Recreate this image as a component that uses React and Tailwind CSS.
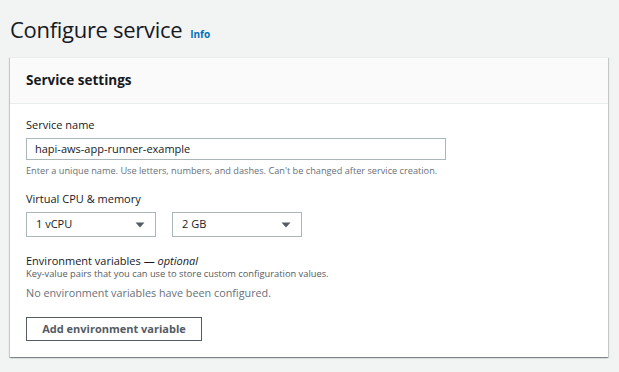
const Caret = () => (
  <svg width="10" height="8" viewBox="0 0 10 8" className="shrink-0">
    <path d="M0.5 1.5h9L5 6.5z" fill="#545b64" />
  </svg>
);

const Select = ({ value }) => (
  <div className="w-[130px] h-[25px] border border-[#aab7b8] bg-white flex items-center justify-between pl-[9px] pr-[10px]">
    <span className="text-[11px] text-[#16191f]">{value}</span>
    <Caret />
  </div>
);

export default function App() {
  return (
    <div
      className="min-h-screen w-[619px] h-[372px] bg-[#f2f3f3] overflow-hidden"
      style={{ fontFamily: '"Open Sans", "Noto Sans", Arial, sans-serif' }}
    >
      <div className="pl-[10px] pt-[14px] flex items-baseline gap-[8px]">
        <h1 className="text-[22px] leading-[30px] text-[#16191f] tracking-[-0.3px]">Configure service</h1>
        <a className="text-[10px] font-bold text-[#0073bb]">Info</a>
      </div>

      <div className="mt-[13px] ml-[10px] w-[598px] bg-white border-t border-[#eaeded] shadow-[0_1px_1px_0_rgba(0,28,36,0.3),1px_1px_1px_0_rgba(0,28,36,0.15),-1px_1px_1px_0_rgba(0,28,36,0.15)]">
        <div className="h-[46px] bg-[#fafafa] border-b border-[#eaeded] flex items-center px-[16px]">
          <h2 className="text-[13.5px] font-bold text-[#16191f]">Service settings</h2>
        </div>

        <div className="px-[16px] pt-[13px] pb-[16px]">
          <div className="text-[11px] leading-[16px] text-[#16191f]">Service name</div>
          <div className="mt-[5px] w-[420px] h-[22px] border border-[#aab7b8] flex items-center pl-[8px]">
            <span className="text-[11px] text-[#16191f]">hapi-aws-app-runner-example</span>
          </div>
          <div className="mt-[4px] text-[9.2px] leading-[13px] text-[#687078]">
            Enter a unique name. Use letters, numbers, and dashes. Can't be changed after service creation.
          </div>

          <div className="mt-[14px] text-[11px] leading-[16px] text-[#16191f]">Virtual CPU &amp; memory</div>
          <div className="mt-[5px] flex gap-[16px]">
            <Select value="1 vCPU" />
            <Select value="2 GB" />
          </div>

          <div className="mt-[16px] text-[11px] leading-[15px] text-[#16191f]">
            Environment variables — <i>optional</i>
          </div>
          <div className="text-[9.3px] leading-[12px] text-[#545b64]">
            Key-value pairs that you can use to store custom configuration values.
          </div>
          <div className="mt-[5px] text-[10.8px] leading-[16px] text-[#687078]">
            No environment variables have been configured.
          </div>

          <button className="mt-[16px] w-[176px] h-[24px] border border-[#545b64] bg-white text-[11px] font-bold text-[#545b64] flex items-center justify-center">
            Add environment variable
          </button>
        </div>
      </div>
    </div>
  );
}
